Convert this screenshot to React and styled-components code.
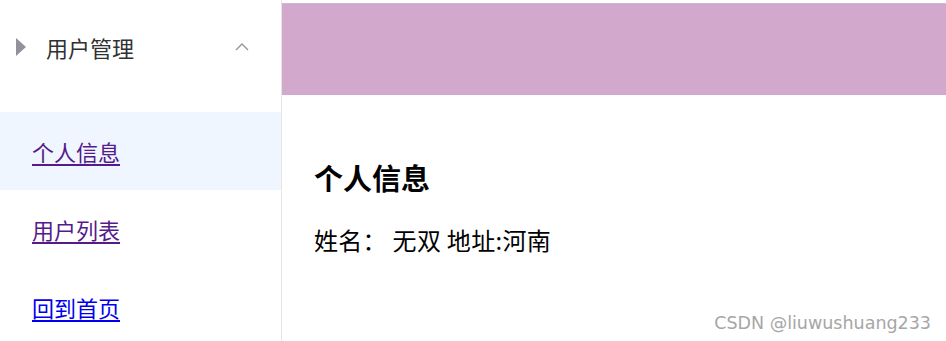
import React from 'react';
import styled, { createGlobalStyle } from 'styled-components';

const GlobalStyle = createGlobalStyle`
	html, body {
		margin: 0;
		padding: 0;
		background: #fff;
		font-family: "Microsoft YaHei", "Noto Sans CJK SC", "Noto Sans", sans-serif;
	}
`;

const Page = styled.div`
	position: relative;
	display: flex;
	width: 946px;
	height: 341px;
	overflow: hidden;
`;

const Aside = styled.nav`
	width: 281px;
	flex-shrink: 0;
	border-right: 1px solid #e6e6e6;
	box-sizing: content-box;
`;

const SubTitle = styled.div`
	display: flex;
	align-items: center;
	height: 94px;
	padding: 0 32px 0 16px;
	color: #303133;
	font-size: 22px;
`;

const Caret = styled.span`
	width: 0;
	height: 0;
	border-top: 9px solid transparent;
	border-bottom: 9px solid transparent;
	border-left: 10px solid #909399;
	margin-right: 20px;
`;

const SubLabel = styled.span`
	flex: 1;
`;

const MenuList = styled.ul`
	list-style: none;
	margin: 18px 0 0;
	padding: 0;
`;

const MenuItem = styled.li`
	display: flex;
	align-items: center;
	height: 78px;
	padding-left: 32px;
	background: ${({ active }) => (active ? '#eff6ff' : 'transparent')};
	font-size: 22px;
`;

const MenuLink = styled.a`
	color: ${({ visited }) => (visited ? '#551a8b' : '#0000ee')};
	text-decoration: underline;
	text-underline-offset: 3px;
	cursor: pointer;
`;

const Main = styled.main`
	flex: 1;
	display: flex;
	flex-direction: column;
	padding-top: 3px;
`;

const Header = styled.header`
	height: 92px;
	background: #d2a9cc;
	border-top: 1px solid #c9bcc8;
	box-sizing: border-box;
`;

const Content = styled.section`
	padding: 62px 32px 0;
	color: #000;
`;

const Title = styled.h3`
	margin: 0 0 24px;
	font-size: 29px;
	font-weight: 700;
	line-height: 40px;
`;

const Info = styled.p`
	margin: 0;
	font-size: 24px;
	line-height: 38px;
	letter-spacing: 0.3px;
`;

const Watermark = styled.div`
	position: absolute;
	right: 15px;
	bottom: 8px;
	color: #a6a6a6;
	font-family: "DejaVu Sans", Verdana, sans-serif;
	font-size: 17.5px;
	text-shadow: 0 0 1px #fff;
`;

const items = [
	{ label: '个人信息', visited: true, active: true },
	{ label: '用户列表', visited: true },
	{ label: '回到首页' },
];

export default function App() {
	return (
		<>
			<GlobalStyle />
			<Page>
				<Aside>
					<SubTitle>
						<Caret />
						<SubLabel>用户管理</SubLabel>
						<svg width="14" height="8" viewBox="0 0 14 8">
							<polyline points="1,7 7,1 13,7" fill="none" stroke="#909399" strokeWidth="1.3" />
						</svg>
					</SubTitle>
					<MenuList>
						{items.map(item => (
							<MenuItem key={item.label} active={item.active}>
								<MenuLink visited={item.visited}>{item.label}</MenuLink>
							</MenuItem>
						))}
					</MenuList>
				</Aside>
				<Main>
					<Header />
					<Content>
						<Title>个人信息</Title>
						<Info>姓名： 无双 地址:河南</Info>
					</Content>
				</Main>
				<Watermark>CSDN @liuwushuang233</Watermark>
			</Page>
		</>
	);
}
